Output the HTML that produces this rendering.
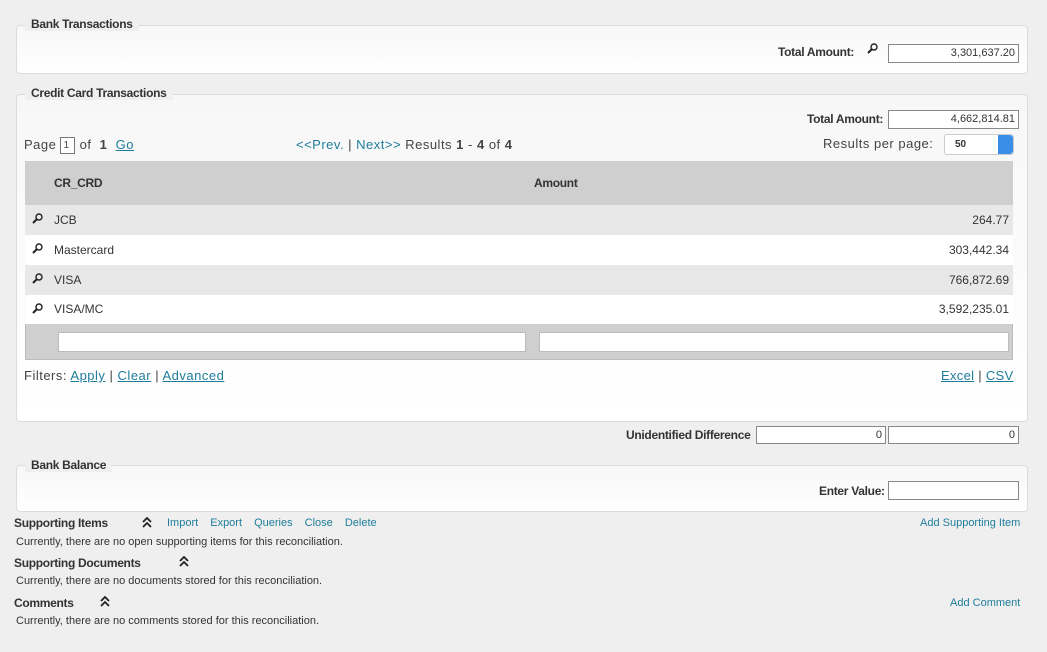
<!DOCTYPE html>
<html><head><style>
body{margin:0;width:1047px;height:652px;background:#efefef;font-family:"Liberation Sans",sans-serif;color:#333;position:relative;overflow:hidden;font-size:12px}
.a{position:absolute;white-space:nowrap}
.panel{position:absolute;left:16px;width:1010px;border:1px solid #dcdcdc;border-radius:4px;background:linear-gradient(#f7f7f7,#fff)}
.leg{position:absolute;background:#efefef;padding:0 6px;font-weight:bold;font-size:12px;color:#333;letter-spacing:-0.3px}
.inp{position:absolute;background:#fff;border:1px solid #888;height:18px;box-sizing:border-box;text-align:right;font-size:11px;line-height:16px;padding-right:3px}
.b{font-weight:bold;letter-spacing:-0.3px}
.lnk{color:#1f7d9c}
u{color:#1f7d9c;text-decoration:underline}
.row{position:absolute;left:25px;width:988px;height:30px;line-height:30px}
.mg{position:absolute;left:6px;top:7px}
</style></head><body>
<div class="panel" style="top:25px;height:47px"></div>
<div class="leg" style="left:25px;top:17px">Bank Transactions</div>
<div class="a b" style="left:778px;top:45px">Total Amount:</div>
<svg class="a" style="left:866px;top:42px" width="13" height="13" viewBox="0 0 13 13"><circle cx="8" cy="5" r="3" fill="none" stroke="#222" stroke-width="1.4"/><path d="M6 7L2 11" stroke="#222" stroke-width="2"/></svg>
<div class="inp" style="left:888px;top:44px;width:131px;height:19px;line-height:17px">3,301,637.20</div>

<div class="panel" style="top:94px;height:326px"></div>
<div class="leg" style="left:25px;top:86px">Credit Card Transactions</div>
<div class="a b" style="left:807px;top:112px">Total Amount:</div>
<div class="inp" style="left:888px;top:110px;width:131px;height:19px;line-height:17px">4,662,814.81</div>
<div class="a" style="left:823px;top:136px;font-size:13px;letter-spacing:0.5px;color:#444">Results per page:</div>
<div class="a" style="left:944px;top:134px;width:68px;height:19px;border:1px solid #ccc;border-radius:3px;background:#fff;font-size:10px;line-height:19px;font-weight:bold;text-indent:10px">50<div style="position:absolute;right:0;top:0;width:15px;height:19px;background:#3b8ee8;border-radius:0 3px 3px 0"></div></div>
<div class="a" style="left:24px;top:137px;font-size:13px;letter-spacing:0.5px;color:#444">Page <span style="display:inline-block;width:13px;height:15px;border:1px solid #777;background:#fff;font-size:10px;line-height:15px;text-indent:2px;vertical-align:middle">1</span> of &nbsp;<b>1</b> &nbsp;<u>Go</u></div>
<div class="a" style="left:296px;top:137px;font-size:13px;letter-spacing:0.5px;color:#444"><span class="lnk">&lt;&lt;Prev.</span> | <span class="lnk">Next&gt;&gt;</span> Results <b>1</b> - <b>4</b> of <b>4</b></div>

<div class="a" style="left:25px;top:161px;width:988px;height:44px;background:#cfcfcf"></div>
<div class="a b" style="left:54px;top:176px">CR_CRD</div>
<div class="a b" style="left:534px;top:176px">Amount</div>
<div class="row" style="top:205px;background:#e8e8e8"><svg class="mg" width="13" height="13" viewBox="0 0 13 13"><circle cx="8" cy="5" r="3" fill="none" stroke="#222" stroke-width="1.4"/><path d="M6 7L2 11" stroke="#222" stroke-width="2"/></svg><span class="a" style="left:29px">JCB</span><span class="a" style="right:4px">264.77</span></div>
<div class="row" style="top:235px;background:#fff"><svg class="mg" width="13" height="13" viewBox="0 0 13 13"><circle cx="8" cy="5" r="3" fill="none" stroke="#222" stroke-width="1.4"/><path d="M6 7L2 11" stroke="#222" stroke-width="2"/></svg><span class="a" style="left:29px">Mastercard</span><span class="a" style="right:4px">303,442.34</span></div>
<div class="row" style="top:265px;background:#e8e8e8"><svg class="mg" width="13" height="13" viewBox="0 0 13 13"><circle cx="8" cy="5" r="3" fill="none" stroke="#222" stroke-width="1.4"/><path d="M6 7L2 11" stroke="#222" stroke-width="2"/></svg><span class="a" style="left:29px">VISA</span><span class="a" style="right:4px">766,872.69</span></div>
<div class="row" style="top:295px;height:29px;line-height:29px;background:#fff"><svg class="mg" width="13" height="13" viewBox="0 0 13 13"><circle cx="8" cy="5" r="3" fill="none" stroke="#222" stroke-width="1.4"/><path d="M6 7L2 11" stroke="#222" stroke-width="2"/></svg><span class="a" style="left:29px">VISA/MC</span><span class="a" style="right:4px">3,592,235.01</span></div>
<div class="a" style="left:25px;top:324px;width:986px;height:35px;background:#cfcfcf;border:1px solid #bbb;border-top:none"></div>
<div class="a" style="left:58px;top:332px;width:466px;height:18px;background:#fff;border:1px solid #bbb"></div>
<div class="a" style="left:539px;top:332px;width:468px;height:18px;background:#fff;border:1px solid #bbb"></div>
<div class="a" style="left:24px;top:368px;font-size:13px;letter-spacing:0.5px;color:#444">Filters: <u>Apply</u> | <u>Clear</u> | <u>Advanced</u></div>
<div class="a" style="left:941px;top:368px;font-size:13px;letter-spacing:0.3px;color:#444"><u>Excel</u> | <u>CSV</u></div>

<div class="a b" style="left:626px;top:428px">Unidentified Difference</div>
<div class="inp" style="left:756px;top:426px;width:130px">0</div>
<div class="inp" style="left:888px;top:426px;width:131px">0</div>

<div class="panel" style="top:465px;height:45px"></div>
<div class="leg" style="left:25px;top:458px">Bank Balance</div>
<div class="a b" style="left:819px;top:484px">Enter Value:</div>
<div class="inp" style="left:888px;top:481px;width:131px;height:19px"></div>

<div class="a b" style="left:14px;top:516px">Supporting Items</div>
<div class="a lnk" style="left:167px;top:517px;font-size:11px;word-spacing:9px">Import Export Queries Close Delete</div>
<div class="a lnk" style="left:920px;top:517px;font-size:11px">Add Supporting Item</div>
<div class="a" style="left:16px;top:536px;font-size:11px">Currently, there are no open supporting items for this reconciliation.</div>
<div class="a b" style="left:14px;top:556px">Supporting Documents</div>
<div class="a" style="left:16px;top:575px;font-size:11px">Currently, there are no documents stored for this reconciliation.</div>
<div class="a b" style="left:14px;top:596px">Comments</div>
<div class="a lnk" style="left:950px;top:597px;font-size:11px">Add Comment</div>
<div class="a" style="left:16px;top:615px;font-size:11px">Currently, there are no comments stored for this reconciliation.</div>
<svg class="a" style="left:141px;top:517px" width="12" height="11"><path d="M2 5L6 1L10 5M2 10L6 6L10 10" fill="none" stroke="#222" stroke-width="1.8"/></svg>
<svg class="a" style="left:178px;top:556px" width="12" height="11"><path d="M2 5L6 1L10 5M2 10L6 6L10 10" fill="none" stroke="#222" stroke-width="1.8"/></svg>
<svg class="a" style="left:99px;top:596px" width="12" height="11"><path d="M2 5L6 1L10 5M2 10L6 6L10 10" fill="none" stroke="#222" stroke-width="1.8"/></svg>
</body></html>
